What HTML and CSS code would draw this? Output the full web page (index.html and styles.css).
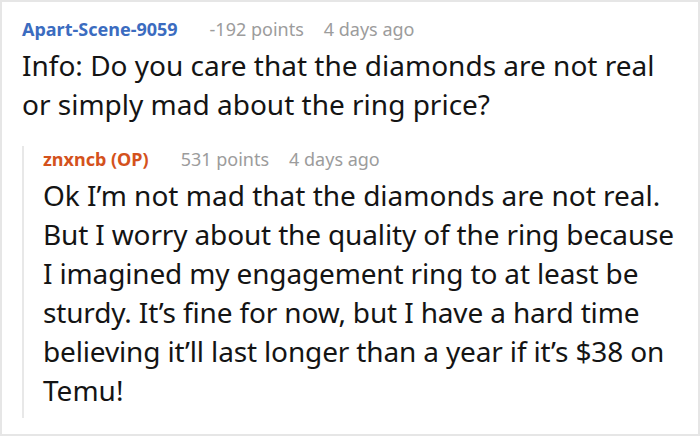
FILE: index.html
```html
<!DOCTYPE html>
<html>
<head>
<meta charset="utf-8">
<link rel="stylesheet" href="styles.css">
</head>
<body>
<div class="card">
  <div class="comment">
    <div class="meta">
      <span class="user">Apart-Scene-9059</span>
      <span class="points">-192 points</span>
      <span class="time">4 days ago</span>
    </div>
    <p class="body">Info: Do you care that the diamonds are not real<br>or simply mad about the ring price?</p>
    <div class="reply">
      <div class="meta">
        <span class="user op">znxncb (OP)</span>
        <span class="points">531 points</span>
        <span class="time">4 days ago</span>
      </div>
      <p class="body">Ok I’m not mad that the diamonds are not real.<br><span class="tight">But I worry about the quality of the ring because</span><br><span class="tight">I imagined my engagement ring to at least be</span><br><span class="tight">sturdy. It’s fine for now, but I have a hard time</span><br><span class="tight">believing it’ll last longer than a year if it’s $38 on</span><br>Temu!</p>
    </div>
  </div>
</div>
</body>
</html>
```

FILE: styles.css
```css
html, body {
  margin: 0;
  padding: 0;
  background: #ffffff;
}
.card {
  width: 700px;
  height: 436px;
  box-sizing: border-box;
  border: 2px solid #e6e6e6;
  padding: 14px 20px 0 20px;
  font-family: "Noto Sans", "Open Sans", sans-serif;
  color: #141414;
}
.meta {
  display: flex;
  align-items: baseline;
  font-size: 18px;
  line-height: 26px;
  margin-bottom: 4px;
}
.user {
  font-weight: 700;
  color: #3b6cc0;
  margin-right: 32px;
}
.user.op {
  color: #d4521c;
}
.points {
  color: #9c9c9c;
  margin-right: 20px;
}
.time {
  color: #9c9c9c;
}
.body {
  margin: 0;
  font-size: 28px;
  line-height: 39px;
  white-space: nowrap;
}
.tight {
  letter-spacing: -0.15px;
}
.reply {
  margin-top: 22px;
  border-left: 2px solid #e8e8e8;
  padding-left: 19px;
  padding-bottom: 8px;
}
```
